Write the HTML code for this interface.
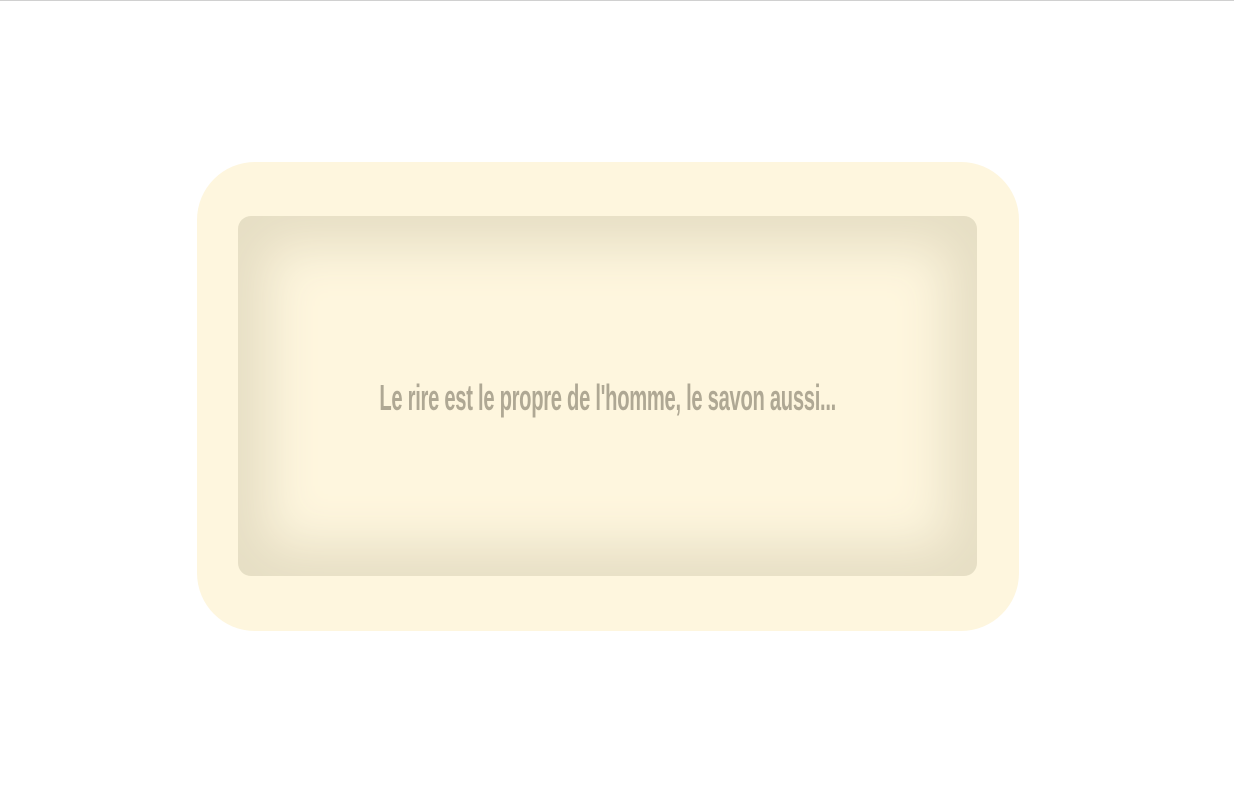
<!DOCTYPE html>
<html><head><style>
html,body{margin:0;padding:0;background:#fff;width:1234px;height:800px;overflow:hidden}
.top{position:absolute;left:0;top:0;width:1234px;height:1px;background:#d0d0d0}
.outer{position:absolute;left:197px;top:162px;width:822px;height:469px;border-radius:58px;background:#fef6de}
.inner{position:absolute;left:238px;top:216px;width:739px;height:360px;border-radius:13px;background:#fef6de;box-shadow:inset 0 0 50px 30px #e6dec4}
.txt{position:absolute;left:0;top:373px;width:1234px;text-align:center;line-height:50px;height:50px}
.txt span{display:inline-block;font-family:"Liberation Sans Narrow","Liberation Sans",sans-serif;font-weight:bold;font-size:36px;color:#afa894;transform:scaleX(0.56);transform-origin:center;white-space:nowrap;letter-spacing:-0.5px;position:relative;left:-9px}
</style></head><body>
<div class="top"></div>
<div class="outer"></div>
<div class="inner"></div>
<div class="txt"><span>Le rire est le propre de l'homme, le savon aussi...</span></div>
</body></html>
